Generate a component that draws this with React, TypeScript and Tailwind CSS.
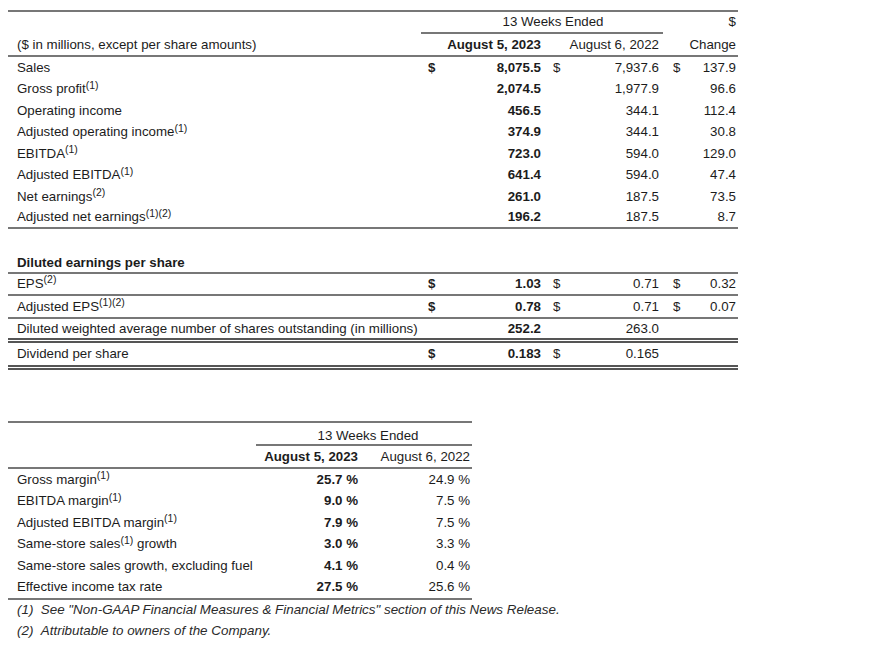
import React from "react";

type Line = "none" | "single" | "double";

interface MainRow {
  label: string;
  sup?: string;
  v23: string;
  v22: string;
  ch: string;
  dollar?: boolean;
  line?: Line;
  h?: string;
}

const mainRows: MainRow[] = [
  { label: "Sales", v23: "8,075.5", v22: "7,937.6", ch: "137.9", dollar: true },
  { label: "Gross profit", sup: "(1)", v23: "2,074.5", v22: "1,977.9", ch: "96.6" },
  { label: "Operating income", v23: "456.5", v22: "344.1", ch: "112.4" },
  { label: "Adjusted operating income", sup: "(1)", v23: "374.9", v22: "344.1", ch: "30.8" },
  { label: "EBITDA", sup: "(1)", v23: "723.0", v22: "594.0", ch: "129.0" },
  { label: "Adjusted EBITDA", sup: "(1)", v23: "641.4", v22: "594.0", ch: "47.4" },
  { label: "Net earnings", sup: "(2)", v23: "261.0", v22: "187.5", ch: "73.5" },
  { label: "Adjusted net earnings", sup: "(1)(2)", v23: "196.2", v22: "187.5", ch: "8.7", line: "single" },
];

// heights include the bottom rule (border-box)
const epsRows: MainRow[] = [
  { label: "EPS", sup: "(2)", v23: "1.03", v22: "0.71", ch: "0.32", dollar: true, line: "single", h: "h-[22px]" },
  { label: "Adjusted EPS", sup: "(1)(2)", v23: "0.78", v22: "0.71", ch: "0.07", dollar: true, line: "single", h: "h-[23px]" },
  { label: "Diluted weighted average number of shares outstanding (in millions)", v23: "252.2", v22: "263.0", ch: "", line: "double", h: "h-[24px]" },
  { label: "Dividend per share", v23: "0.183", v22: "0.165", ch: "", dollar: true, line: "double", h: "h-[27px]" },
];

const marginRows = [
  { label: "Gross margin", sup: "(1)", after: "", a: "25.7 %", b: "24.9 %" },
  { label: "EBITDA margin", sup: "(1)", after: "", a: "9.0 %", b: "7.5 %" },
  { label: "Adjusted EBITDA margin", sup: "(1)", after: "", a: "7.9 %", b: "7.5 %" },
  { label: "Same-store sales", sup: "(1)", after: " growth", a: "3.0 %", b: "3.3 %" },
  { label: "Same-store sales growth, excluding fuel", sup: "", after: "", a: "4.1 %", b: "0.4 %" },
  { label: "Effective income tax rate", sup: "", after: "", a: "27.5 %", b: "25.6 %" },
];

function Sup({ children }: { children: React.ReactNode }) {
  return <sup className="text-[10.5px] top-[-0.45em]">{children}</sup>;
}

function lineClass(line?: Line) {
  if (line === "single") return "border-b-2 border-[#777]";
  if (line === "double") return "border-b-[5px] border-double border-[#555]";
  return "";
}

function DataRow({ row }: { row: MainRow }) {
  return (
    <div className={`flex items-center ${row.h ?? "h-[21.5px]"} ${lineClass(row.line)}`}>
      <div className="w-[413px] pl-[9px] whitespace-nowrap">
        {row.label}
        {row.sup && <Sup>{row.sup}</Sup>}
      </div>
      <div className="w-[19px] pl-[7px] font-bold">{row.dollar ? "$" : ""}</div>
      <div className="w-[105px] pr-[4px] text-right font-bold">{row.v23}</div>
      <div className="w-[20px] pl-[8px]">{row.dollar ? "$" : ""}</div>
      <div className="w-[98px] pr-[4px] text-right">{row.v22}</div>
      <div className="w-[20px] pl-[10px]">{row.dollar && row.ch ? "$" : ""}</div>
      <div className="w-[55px] pr-[2px] text-right">{row.ch}</div>
    </div>
  );
}

export default function App() {
  return (
    <div
      className="w-[886px] h-[652px] bg-white text-[13.3px] text-[#1c1c1c] overflow-hidden"
      style={{ fontFamily: '"Liberation Sans", Arial, sans-serif' }}
    >
      {/* summary table */}
      <div className="ml-[8px] mt-[10px] w-[730px] border-t-2 border-[#777]">
        <div className="flex h-[22px]">
          <div className="w-[413px]" />
          <div className="w-[242px] border-b-2 border-[#777] pl-[22px] text-center leading-[20px]">
            13 Weeks Ended
          </div>
          <div className="w-[75px] pr-[2px] text-right leading-[20px]">$</div>
        </div>
        <div className="flex items-center h-[23px] border-b-2 border-[#777]">
          <div className="w-[413px] pl-[9px]">($ in millions, except per share amounts)</div>
          <div className="w-[124px] pr-[4px] text-right font-bold">August 5, 2023</div>
          <div className="w-[118px] pr-[4px] text-right">August 6, 2022</div>
          <div className="w-[75px] pr-[2px] text-right">Change</div>
        </div>
        {mainRows.map((r) => (
          <DataRow key={r.label} row={r} />
        ))}
        <div className="h-[24px]" />
        <div className="flex items-center h-[21px] border-b-2 border-[#777] pl-[9px] font-bold">
          Diluted earnings per share
        </div>
        {epsRows.map((r) => (
          <DataRow key={r.label} row={r} />
        ))}
      </div>

      {/* margin table */}
      <div className="ml-[8px] mt-[51px] w-[464px] border-t-2 border-[#777]">
        <div className="flex h-[23px]">
          <div className="w-[248px]" />
          <div className="w-[216px] border-b-2 border-[#777] pl-[8px] text-center leading-[25px]">
            13 Weeks Ended
          </div>
        </div>
        <div className="flex items-center h-[23px] border-b-2 border-[#777]">
          <div className="w-[248px]" />
          <div className="w-[106px] pr-[4px] text-right font-bold">August 5, 2023</div>
          <div className="w-[110px] pr-[2px] text-right">August 6, 2022</div>
        </div>
        <div className="border-b-2 border-[#777]">
          {marginRows.map((r) => (
            <div key={r.label} className="flex items-center h-[21.5px]">
              <div className="w-[248px] pl-[9px] whitespace-nowrap">
                {r.label}
                {r.sup && <Sup>{r.sup}</Sup>}
                {r.after}
              </div>
              <div className="w-[106px] pr-[4px] text-right font-bold">{r.a}</div>
              <div className="w-[110px] pr-[2px] text-right">{r.b}</div>
            </div>
          ))}
        </div>
      </div>
      <div className="pl-[17px] italic text-[13.4px] text-[#2a2a2a]">
        <div className="h-[20px] flex items-center">
          (1)&nbsp;&nbsp;See "Non-GAAP Financial Measures &amp; Financial Metrics" section of this News Release.
        </div>
        <div className="h-[23px] flex items-center">(2)&nbsp;&nbsp;Attributable to owners of the Company.</div>
      </div>
    </div>
  );
}
